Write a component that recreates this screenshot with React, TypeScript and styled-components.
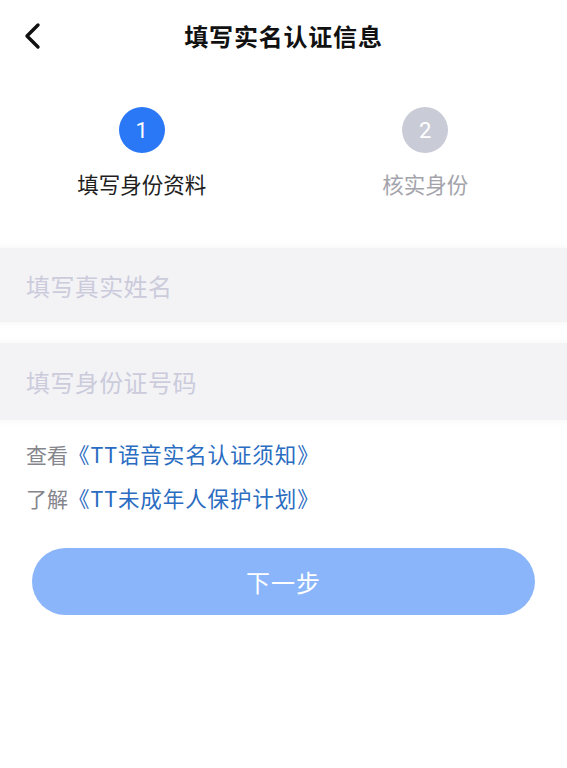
import React from "react";
import styled, { createGlobalStyle } from "styled-components";

const Global = createGlobalStyle`
  html, body { margin: 0; padding: 0; background: #ffffff; }
  body { font-family: "Noto Sans CJK SC", "Noto Sans", sans-serif; }
  * { box-sizing: border-box; }
`;

const Page = styled.div`
  width: 567px;
  min-height: 768px;
  background: #fff;
  display: flex;
  flex-direction: column;
`;

const NavBar = styled.div`
  height: 74px;
  display: grid;
  grid-template-columns: 74px 1fr 74px;
  align-items: center;
  padding-bottom: 3px;
`;

const BackButton = styled.div`
  display: flex;
  align-items: center;
  padding-left: 22px;
  height: 100%;
`;

const Title = styled.h1`
  margin: 0;
  text-align: center;
  font-size: 24px;
  font-weight: 700;
  color: #111;
  letter-spacing: 0.8px;
`;

const Steps = styled.div`
  display: grid;
  grid-template-columns: 1fr 1fr;
  padding-top: 33px;
  height: 174px;
`;

const Step = styled.div`
  display: flex;
  flex-direction: column;
  align-items: center;
`;

const Circle = styled.div<{ $active?: boolean }>`
  width: 46px;
  height: 46px;
  border-radius: 50%;
  background: ${(p) => (p.$active ? "#2a78f5" : "#c9ccd6")};
  color: #fff;
  font-family: "Roboto", "Noto Sans", sans-serif;
  font-size: 22px;
  display: flex;
  align-items: center;
  justify-content: center;
`;

const StepLabel = styled.div<{ $active?: boolean }>`
  margin-top: 15px;
  font-size: 21.5px;
  color: ${(p) => (p.$active ? "#1e1e1e" : "#a3a3ab")};
`;

const Field = styled.div<{ $tall?: boolean }>`
  height: ${(p) => (p.$tall ? 77 : 74)}px;
  background: #f3f3f5;
  box-shadow: 0 0 6px 2px #f8f8f9;
  display: flex;
  align-items: center;
  padding-left: 26px;
`;

const Placeholder = styled.span`
  font-size: 24px;
  color: #cbcbdc;
  letter-spacing: 0.4px;
`;

const Fields = styled.div`
  display: flex;
  flex-direction: column;
  gap: 21px;
`;

const Links = styled.div`
  display: flex;
  flex-direction: column;
  gap: 14px;
  padding: 19px 0 0 26px;
`;

const LinkRow = styled.div`
  font-size: 21px;
  color: #85858c;
  line-height: 30px;
`;

const LinkText = styled.span`
  color: #2a6cc2;
  font-size: 21.5px;
  letter-spacing: 0.9px;
`;

const ButtonWrap = styled.div`
  padding: 35px 32px 0 32px;
`;

const Button = styled.button`
  width: 100%;
  height: 67px;
  border: none;
  border-radius: 34px;
  background: #8ab5fa;
  color: #fff;
  font-family: "Noto Sans CJK SC", sans-serif;
  font-size: 24px;
  letter-spacing: 1px;
`;

export default function App() {
  return (
    <>
      <Global />
      <Page>
        <NavBar>
          <BackButton>
            <svg width="20" height="28" viewBox="0 0 20 28">
              <path d="M16 3 L5 14 L16 25" fill="none" stroke="#111" strokeWidth="3.4" strokeLinecap="round" strokeLinejoin="round" />
            </svg>
          </BackButton>
          <Title>填写实名认证信息</Title>
          <div />
        </NavBar>
        <Steps>
          <Step>
            <Circle $active>1</Circle>
            <StepLabel $active>填写身份资料</StepLabel>
          </Step>
          <Step>
            <Circle>2</Circle>
            <StepLabel>核实身份</StepLabel>
          </Step>
        </Steps>
        <Fields>
          <Field>
            <Placeholder>填写真实姓名</Placeholder>
          </Field>
          <Field $tall>
            <Placeholder>填写身份证号码</Placeholder>
          </Field>
        </Fields>
        <Links>
          <LinkRow>
            查看<LinkText>《TT语音实名认证须知》</LinkText>
          </LinkRow>
          <LinkRow>
            了解<LinkText>《TT未成年人保护计划》</LinkText>
          </LinkRow>
        </Links>
        <ButtonWrap>
          <Button>下一步</Button>
        </ButtonWrap>
      </Page>
    </>
  );
}
